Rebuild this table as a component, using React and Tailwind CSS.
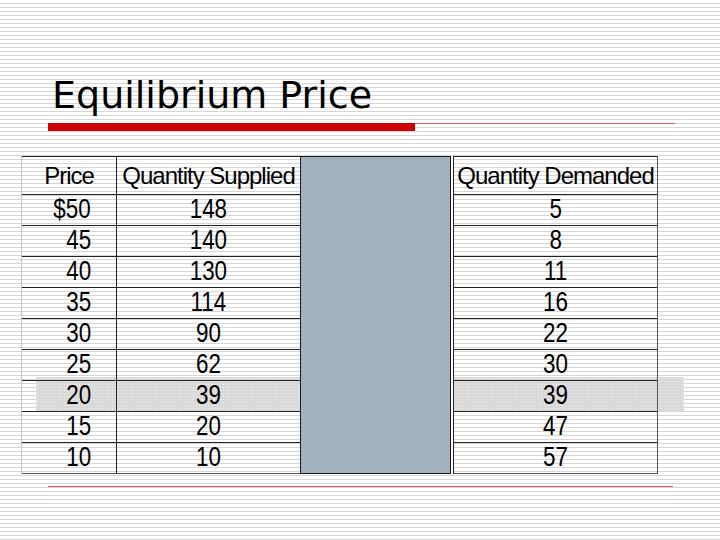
import React from "react";

const rows = [
  ["$50", "148", "5"],
  ["45", "140", "8"],
  ["40", "130", "11"],
  ["35", "114", "16"],
  ["30", "90", "22"],
  ["25", "62", "30"],
  ["20", "39", "39"],
  ["15", "20", "47"],
  ["10", "10", "57"],
];

const num = "inline-block whitespace-nowrap text-[28px] leading-none scale-x-[0.8]";
const head = "inline-block whitespace-nowrap text-[24px] leading-none tracking-[-1px]";

export default function App() {
  return (
    <div
      className="w-[720px] h-[540px] overflow-hidden text-black bg-[repeating-linear-gradient(to_bottom,#ffffff_0px,#ffffff_3px,#d6d6d6_3px,#d6d6d6_4px)]"
      style={{ fontFamily: '"Liberation Sans", Arial, sans-serif' }}
    >
      {/* title */}
      <div className="pt-[76px] pl-[52px]">
        <h1
          className="text-[38px] leading-none font-normal"
          style={{ fontFamily: '"DejaVu Sans", Verdana, sans-serif' }}
        >
          Equilibrium Price
        </h1>
      </div>

      {/* red rule */}
      <div className="flex items-start mt-[9px] ml-[48px]">
        <div className="w-[367px] h-[8px] bg-[#cc0000]" />
        <div className="w-[260px] h-px bg-[#d46060]" />
      </div>

      {/* table */}
      <div className="relative ml-[21px] mt-[25px] w-[663px] h-[318px]">
        <div className="absolute left-[15px] top-[221px] w-[264px] h-[34px] bg-[#d9d9d9] bg-[radial-gradient(#efefef_0.7px,transparent_0.8px)] bg-[length:3px_3px]" />
        <div className="absolute left-[432px] top-[221px] w-[231px] h-[34px] bg-[#d9d9d9] bg-[radial-gradient(#efefef_0.7px,transparent_0.8px)] bg-[length:3px_3px]" />

        <div className="relative flex items-start">
          {/* price + supplied */}
          <div className="w-[279px] shrink-0 border-l border-[#c4c4c4]">
            <div className="flex h-[38px] border-t border-[#222]">
              <div className="w-[95px] shrink-0 flex items-center justify-center border-r border-[#222]">
                <span className={head}>Price</span>
              </div>
              <div className="flex-1 min-w-0 flex items-center justify-center">
                <span className={head}>Quantity Supplied</span>
              </div>
            </div>
            {rows.map((r, i) => (
              <div
                key={r[0]}
                className={
                  i === rows.length - 1
                    ? "flex h-[32px] border-t border-b border-t-[#222] border-b-[#555]"
                    : "flex h-[31px] border-t border-[#222]"
                }
              >
                <div className="w-[95px] shrink-0 flex items-center justify-end pr-[25px] pb-[2px] border-r border-[#222]">
                  <span className={num + " origin-right"}>{r[0]}</span>
                </div>
                <div className="flex-1 min-w-0 flex items-center justify-center pb-[2px]">
                  <span className={num}>{r[1]}</span>
                </div>
              </div>
            ))}
          </div>

          {/* covering box */}
          <div className="w-[151px] shrink-0 h-[318px] bg-[#a3b1bf] border border-[#1a1a1a]" />
          <div className="w-[2px] shrink-0 h-[318px] bg-white" />

          {/* demanded */}
          <div className="w-[205px] shrink-0 border-l border-r border-l-[#222] border-r-[#555]">
            <div className="flex h-[38px] border-t border-[#222] items-center justify-center">
              <span className={head}>Quantity Demanded</span>
            </div>
            {rows.map((r, i) => (
              <div
                key={r[0]}
                className={
                  i === rows.length - 1
                    ? "flex h-[32px] items-center justify-center pb-[2px] border-t border-b border-t-[#222] border-b-[#555]"
                    : "flex h-[31px] items-center justify-center pb-[2px] border-t border-[#222]"
                }
              >
                <span className={num}>{r[2]}</span>
              </div>
            ))}
          </div>
        </div>
      </div>

      {/* bottom rule */}
      <div className="ml-[48px] mt-[12px] w-[625px] h-px bg-[#d46060]" />
    </div>
  );
}
